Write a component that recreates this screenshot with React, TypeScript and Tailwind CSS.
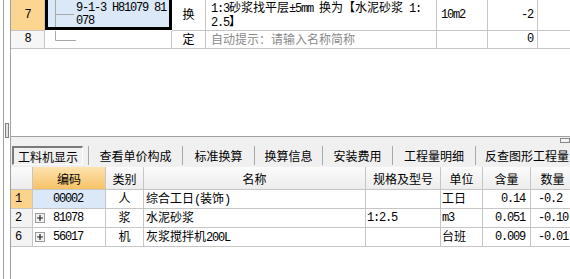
import React from "react";

const MONO = "font-['Liberation_Mono',monospace] tracking-[-1.2px]";
const CJK = "font-['Noto_Sans_CJK_SC',sans-serif]";

function T({ s }: { s: string }) {
  const parts: { t: string; a: boolean }[] = [];
  for (const ch of s) {
    const a = ch.charCodeAt(0) < 0x2000;
    const last = parts[parts.length - 1];
    if (last && last.a === a) last.t += ch;
    else parts.push({ t: ch, a });
  }
  return (
    <span className="leading-[13px]">
      {parts.map((p, i) => (
        <span key={i} className={p.a ? MONO : CJK}>
          {p.t}
        </span>
      ))}
    </span>
  );
}

function Plus() {
  return (
    <div className="w-[10px] h-[10px] border border-[#9a9a9a] bg-[#f2f2f2] flex items-center justify-center">
      <svg width="8" height="8" viewBox="0 0 8 8">
        <path d="M1 4H7M4 1V7" stroke="#222" strokeWidth="1.2" />
      </svg>
    </div>
  );
}

const rows = [
  { h: "1", code: "00002", plus: false, type: "人", name: "综合工日(装饰)", spec: "", unit: "工日", qty: "0.14", num: "-0.2", sel: true },
  { h: "2", code: "81078", plus: true, type: "浆", name: "水泥砂浆", spec: "1:2.5", unit: "m3", qty: "0.051", num: "-0.10", sel: false },
  { h: "6", code: "56017", plus: true, type: "机", name: "灰浆搅拌机200L", spec: "", unit: "台班", qty: "0.009", num: "-0.01", sel: false },
];

export default function App() {
  const cell = "border-r border-b border-[#c6c6c6] shrink-0";
  return (
    <div className="w-[570px] h-[279px] overflow-hidden bg-white flex text-[12px] text-black whitespace-pre leading-[13px] font-['Liberation_Mono',monospace]">
      {/* left gutter */}
      <div className="w-[10px] h-full flex shrink-0">
        <div className="w-[3px]" />
        <div className="w-px h-full bg-[#a0a0a0]" />
        <div className="flex-1 flex flex-col">
          <div className="h-[123px]" />
          <div className="ml-[1px] w-[4px] h-[15px] border border-[#808080] bg-[#e4e4e4]" />
        </div>
      </div>

      {/* main */}
      <div className="flex-1 flex flex-col border-l border-[#a0a0a0] min-w-0">
        {/* top panel */}
        <div className="h-[137px] shrink-0 border-b border-[#a0a0a0] bg-white flex flex-col">
          {/* row 7 */}
          <div className="flex h-[31px]">
            <div className={`${cell} w-[34px] bg-[#fcd690] flex items-center justify-center`}>
              <T s="7" />
            </div>
            <div className="w-[127px] shrink-0 h-[30px] border-l-[3px] border-r-[3px] border-b-[3px] border-black bg-[#dae8f8] flex">
              <svg width="28" height="27" className="shrink-0">
                <path d="M7.5 0V27M7.5 14.5H26" stroke="#a8a8a8" strokeWidth="1" />
              </svg>
              <div className="pt-[2px]">
                <div className="h-[13px] flex items-center"><T s="9-1-3 H81079 81" /></div>
                <div className="h-[13px] flex items-center"><T s="078" /></div>
              </div>
            </div>
            <div className={`${cell} w-[34px] flex items-center justify-center`}>
              <T s="换" />
            </div>
            <div className={`${cell} w-[231px] pl-[5px] pt-[1px]`}>
              <div className="h-[14px] flex items-center"><T s="1:3砂浆找平层±5mm 换为【水泥砂浆 1:" /></div>
              <div className="h-[14px] flex items-center"><T s="2.5】" /></div>
            </div>
            <div className={`${cell} w-[51px] pl-[4px] flex items-center`}>
              <T s="10m2" />
            </div>
            <div className={`${cell} w-[50px] pr-[4px] flex items-center justify-end`}>
              <T s="-2" />
            </div>
            <div className="flex-1 border-b border-[#c6c6c6]" />
          </div>
          {/* row 8 */}
          <div className="flex h-[18px]">
            <div className={`${cell} w-[34px] bg-[#f6f6f6] flex items-center justify-center`}>
              <T s="8" />
            </div>
            <div className={`${cell} w-[127px] flex`}>
              <svg width="31" height="17" className="shrink-0">
                <path d="M10.5 0V9.5H31" stroke="#a8a8a8" strokeWidth="1" fill="none" />
              </svg>
            </div>
            <div className={`${cell} w-[34px] flex items-center justify-center`}>
              <T s="定" />
            </div>
            <div className={`${cell} w-[231px] pl-[5px] flex items-center text-[#8a8a8a]`}>
              <T s="自动提示：请输入名称简称" />
            </div>
            <div className={`${cell} w-[51px]`} />
            <div className={`${cell} w-[50px] pr-[4px] flex items-center justify-end`}>
              <T s="0" />
            </div>
            <div className="flex-1 border-b border-[#c6c6c6]" />
          </div>
          <div className="flex-1" />
        </div>

        {/* tab bar */}
        <div className="h-[30px] shrink-0 bg-[#f0f0f0] pt-[9px] flex relative">
          <div className="absolute right-0 top-[1px] w-[10px] h-[5px] border border-[#888] bg-[#f4f4f4]" />
          <div className="w-[77px] shrink-0 h-[19px]">
            <div className="ml-[1px] w-[71px] h-[19px] border-t-2 border-l-2 border-b border-r border-t-[#7a7a7a] border-l-[#7a7a7a] border-b-white border-r-white flex items-center justify-center">
              <span className={CJK}>工料机显示</span>
            </div>
          </div>
          <div className="w-[94px] shrink-0 h-[19px] border-l border-[#a8a8a8] flex items-center justify-center">
            <span className={CJK}>查看单价构成</span>
          </div>
          <div className="w-[72px] shrink-0 h-[19px] border-l border-[#a8a8a8] flex items-center justify-center">
            <span className={CJK}>标准换算</span>
          </div>
          <div className="w-[68px] shrink-0 h-[19px] border-l border-[#a8a8a8] flex items-center justify-center">
            <span className={CJK}>换算信息</span>
          </div>
          <div className="w-[70px] shrink-0 h-[19px] border-l border-[#a8a8a8] flex items-center justify-center">
            <span className={CJK}>安装费用</span>
          </div>
          <div className="w-[83px] shrink-0 h-[19px] border-l border-[#a8a8a8] flex items-center justify-center">
            <span className={CJK}>工程量明细</span>
          </div>
          <div className="w-[105px] shrink-0 h-[19px] border-l border-[#a8a8a8] pl-[9px] flex items-center">
            <span className={CJK}>反查图形工程量</span>
          </div>
        </div>

        {/* grid header */}
        <div className="h-[23px] shrink-0 flex bg-gradient-to-b from-[#fbfbfb] to-[#ececec]">
          <div className={`${cell} w-[22px]`} />
          <div className={`${cell} w-[73px] bg-gradient-to-b from-[#fde3ae] to-[#f6c264] flex items-center justify-center`}>
            <span className={CJK}>编码</span>
          </div>
          <div className={`${cell} w-[38px] flex items-center justify-center`}>
            <span className={CJK}>类别</span>
          </div>
          <div className={`${cell} w-[222px] flex items-center justify-center`}>
            <span className={CJK}>名称</span>
          </div>
          <div className={`${cell} w-[75px] flex items-center justify-center`}>
            <span className={CJK}>规格及型号</span>
          </div>
          <div className={`${cell} w-[42px] flex items-center justify-center`}>
            <span className={CJK}>单位</span>
          </div>
          <div className={`${cell} w-[48px] flex items-center justify-center`}>
            <span className={CJK}>含量</span>
          </div>
          <div className={`${cell} w-[44px] flex items-center justify-center`}>
            <span className={CJK}>数量</span>
          </div>
        </div>

        {/* grid rows */}
        {rows.map((r) => (
          <div key={r.h} className="h-[19px] shrink-0 flex">
            <div className={`${cell} w-[22px] pl-[4px] flex items-center ${r.sel ? "bg-[#fcd38a]" : "bg-[#f3f3f3]"}`}>
              <T s={r.h} />
            </div>
            <div className={`${cell} w-[73px] pl-[2px] flex items-center ${r.sel ? "bg-[#dae8f8]" : ""}`}>
              <div className="w-[18px] shrink-0">{r.plus ? <Plus /> : null}</div>
              <T s={r.code} />
            </div>
            <div className={`${cell} w-[38px] flex items-center justify-center`}>
              <T s={r.type} />
            </div>
            <div className={`${cell} w-[222px] pl-[2px] flex items-center`}>
              <T s={r.name} />
            </div>
            <div className={`${cell} w-[75px] pl-[1px] flex items-center`}>
              <T s={r.spec} />
            </div>
            <div className={`${cell} w-[42px] pl-[1px] flex items-center`}>
              <T s={r.unit} />
            </div>
            <div className={`${cell} w-[48px] pr-[5px] flex items-center justify-end`}>
              <T s={r.qty} />
            </div>
            <div className={`${cell} w-[44px] pl-[7px] flex items-center`}>
              <T s={r.num} />
            </div>
          </div>
        ))}
        <div className="flex-1 bg-white" />
      </div>
    </div>
  );
}
